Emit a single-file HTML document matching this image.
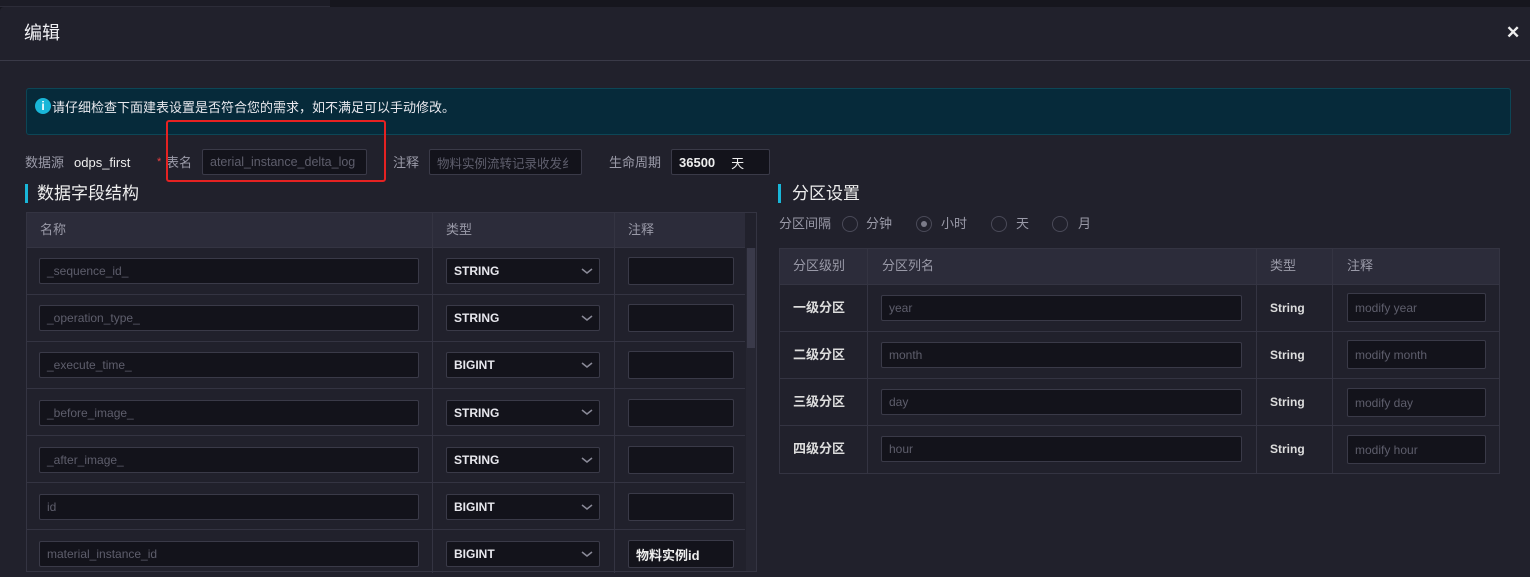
<!DOCTYPE html>
<html><head><meta charset="utf-8"><style>
*{box-sizing:border-box;margin:0;padding:0}
body{width:1530px;height:571px;overflow:hidden;background:#16161e;font-family:"Liberation Sans","Noto Sans CJK SC",sans-serif;position:relative;color:#c8c8d0}
.a{position:absolute}
.modal{left:0;top:7px;width:1530px;height:570px;background:#21212c;border-radius:4px 0 0 0}
.inp{position:absolute;background:#13131b;border:1px solid #3a3a48;border-radius:2px;font-size:12px;color:#5e5e6c;padding-left:7px;display:flex;align-items:center;white-space:nowrap;overflow:hidden}
.sel{color:#e8e8ee;font-weight:bold;font-size:12px}
.t{position:absolute;font-size:13px;white-space:nowrap;line-height:15px}
.hl{position:absolute;height:1px;background:#343442}
.vl{position:absolute;width:1px;background:#343442}
.radio{position:absolute;width:16px;height:16px;border:1px solid #4a4a58;border-radius:50%}
</style></head><body>
<div class="a" style="left:0;top:0;width:330px;height:7px;background:#1c1c26;border-bottom:1px solid #2c2c38"></div>
<div class="a modal"></div>
<div class="t" style="left:24px;top:23px;font-size:18px;line-height:20px;color:#f0f0f4">编辑</div>
<div class="t" style="left:1506px;top:24px;font-size:17px;line-height:18px;font-weight:bold;color:#eee">✕</div>
<div class="hl" style="left:0;top:60px;width:1530px;background:#3a3a48"></div>
<div class="a" style="left:26px;top:88px;width:1485px;height:47px;background:#062a3a;border:1px solid #0c4656;border-radius:3px"></div>
<div class="a" style="left:35px;top:98px;width:16px;height:16px;border-radius:50%;background:#19b6d8;color:#fff;font-size:12px;font-weight:bold;text-align:center;line-height:16px">i</div>
<div class="t" style="left:52px;top:100px;color:#e8e8ee">请仔细检查下面建表设置是否符合您的需求，如不满足可以手动修改。</div>
<div class="t" style="left:25px;top:155px;color:#9a9aa8">数据源</div>
<div class="t" style="left:74px;top:155px;color:#eee">odps_first</div>
<div class="t" style="left:157px;top:155px;color:#e84040;font-size:11px">*</div>
<div class="t" style="left:166px;top:155px;color:#9a9aa8">表名</div>
<div class="inp" style="left:202px;top:149px;width:165px;height:26px;font-size:12.5px">aterial_instance_delta_log</div>
<div class="a" style="left:166px;top:120px;height:62px;border:2px solid #e52222;border-radius:3px;width:220px"></div>
<div class="t" style="left:393px;top:155px;color:#9a9aa8">注释</div>
<div class="inp" style="left:429px;top:149px;width:153px;height:26px;font-size:12.5px">物料实例流转记录收发纟</div>
<div class="t" style="left:609px;top:155px;color:#9a9aa8">生命周期</div>
<div class="inp" style="left:671px;top:149px;width:99px;height:26px;color:#eee;font-weight:bold;font-size:13px">36500 <span style="font-weight:normal;margin-left:16px">天</span></div>
<div class="a" style="left:25px;top:184px;width:3px;height:19px;background:#19b6d8"></div>
<div class="t" style="left:37px;top:184px;font-size:17px;line-height:20px;color:#eee">数据字段结构</div>
<div class="a" style="left:778px;top:184px;width:3px;height:19px;background:#19b6d8"></div>
<div class="t" style="left:792px;top:184px;font-size:17px;line-height:20px;color:#eee">分区设置</div>
<!-- left table -->
<div class="a" style="left:26px;top:212px;width:731px;height:360px;border:1px solid #343442"></div>
<div class="a" style="left:27px;top:213px;width:718px;height:35px;background:#2c2c3a"></div>
<div class="t" style="left:40px;top:222px;color:#9a9aa8">名称</div>
<div class="t" style="left:446px;top:222px;color:#9a9aa8">类型</div>
<div class="t" style="left:628px;top:222px;color:#9a9aa8">注释</div>
<div class="vl" style="left:432px;top:213px;height:360px"></div>
<div class="vl" style="left:614px;top:213px;height:360px"></div>
<div class="a" style="left:746px;top:248px;width:10px;height:323px;background:#262632"></div>
<div class="a" style="left:747px;top:248px;width:8px;height:100px;background:#3a3a4a"></div>
<div class="hl" style="left:27px;top:247px;width:718px"></div>
<div class="hl" style="left:27px;top:294px;width:718px"></div>
<div class="hl" style="left:27px;top:341px;width:718px"></div>
<div class="hl" style="left:27px;top:388px;width:718px"></div>
<div class="hl" style="left:27px;top:435px;width:718px"></div>
<div class="hl" style="left:27px;top:482px;width:718px"></div>
<div class="hl" style="left:27px;top:529px;width:718px"></div>
<div class="inp" style="left:39px;top:258px;width:380px;height:26px">_sequence_id_</div>
<div class="inp sel" style="left:446px;top:258px;width:154px;height:26px">STRING</div>
<div class="inp" style="left:628px;top:257px;width:106px;height:28px"></div>
<div class="inp" style="left:39px;top:305px;width:380px;height:26px">_operation_type_</div>
<div class="inp sel" style="left:446px;top:305px;width:154px;height:26px">STRING</div>
<div class="inp" style="left:628px;top:304px;width:106px;height:28px"></div>
<div class="inp" style="left:39px;top:352px;width:380px;height:26px">_execute_time_</div>
<div class="inp sel" style="left:446px;top:352px;width:154px;height:26px">BIGINT</div>
<div class="inp" style="left:628px;top:351px;width:106px;height:28px"></div>
<div class="inp" style="left:39px;top:400px;width:380px;height:26px">_before_image_</div>
<div class="inp sel" style="left:446px;top:400px;width:154px;height:26px">STRING</div>
<div class="inp" style="left:628px;top:399px;width:106px;height:28px"></div>
<div class="inp" style="left:39px;top:447px;width:380px;height:26px">_after_image_</div>
<div class="inp sel" style="left:446px;top:447px;width:154px;height:26px">STRING</div>
<div class="inp" style="left:628px;top:446px;width:106px;height:28px"></div>
<div class="inp" style="left:39px;top:494px;width:380px;height:26px">id</div>
<div class="inp sel" style="left:446px;top:494px;width:154px;height:26px">BIGINT</div>
<div class="inp" style="left:628px;top:493px;width:106px;height:28px"></div>
<div class="inp" style="left:39px;top:541px;width:380px;height:26px">material_instance_id</div>
<div class="inp sel" style="left:446px;top:541px;width:154px;height:26px">BIGINT</div>
<div class="inp" style="left:628px;top:540px;width:106px;height:28px;color:#eee;font-weight:bold;font-size:13px">物料实例id</div>
<svg class="a" style="left:580px;top:260px" width="14" height="300" viewBox="0 0 14 300" fill="none" stroke="#8a8a98" stroke-width="1.5">
<path d="M2 9l5 4 5-4"/><path d="M2 56l5 4 5-4"/><path d="M2 103l5 4 5-4"/><path d="M2 150l5 4 5-4"/><path d="M2 198l5 4 5-4"/><path d="M2 245l5 4 5-4"/><path d="M2 292l5 4 5-4"/></svg>
<!-- radios -->
<div class="t" style="left:779px;top:216px;color:#9a9aa8">分区间隔</div>
<div class="radio" style="left:842px;top:216px"></div><div class="t" style="left:866px;top:216px;color:#9a9aa8">分钟</div>
<div class="radio" style="left:916px;top:216px"></div><div class="a" style="left:921px;top:221px;width:6px;height:6px;border-radius:50%;background:#7a7a88"></div><div class="t" style="left:941px;top:216px;color:#9a9aa8">小时</div>
<div class="radio" style="left:991px;top:216px"></div><div class="t" style="left:1016px;top:216px;color:#9a9aa8">天</div>
<div class="radio" style="left:1052px;top:216px"></div><div class="t" style="left:1078px;top:216px;color:#9a9aa8">月</div>
<!-- right table -->
<div class="a" style="left:779px;top:248px;width:721px;height:226px;border:1px solid #343442"></div>
<div class="a" style="left:780px;top:249px;width:719px;height:35px;background:#2c2c3a"></div>
<div class="vl" style="left:867px;top:249px;height:225px"></div>
<div class="vl" style="left:1256px;top:249px;height:225px"></div>
<div class="vl" style="left:1332px;top:249px;height:225px"></div>
<div class="hl" style="left:780px;top:284px;width:719px"></div>
<div class="hl" style="left:780px;top:331px;width:719px"></div>
<div class="hl" style="left:780px;top:378px;width:719px"></div>
<div class="hl" style="left:780px;top:425px;width:719px"></div>
<div class="t" style="left:793px;top:258px;color:#9a9aa8">分区级别</div>
<div class="t" style="left:882px;top:258px;color:#9a9aa8">分区列名</div>
<div class="t" style="left:1270px;top:258px;color:#9a9aa8">类型</div>
<div class="t" style="left:1347px;top:258px;color:#9a9aa8">注释</div>
<div class="t" style="left:793px;top:300px;color:#ddd;font-weight:bold">一级分区</div>
<div class="inp" style="left:881px;top:295px;width:361px;height:26px">year</div>
<div class="t" style="left:1270px;top:301px;color:#ddd;font-weight:bold;font-size:12px">String</div>
<div class="inp" style="left:1347px;top:293px;width:139px;height:29px">modify year</div>
<div class="t" style="left:793px;top:347px;color:#ddd;font-weight:bold">二级分区</div>
<div class="inp" style="left:881px;top:342px;width:361px;height:26px">month</div>
<div class="t" style="left:1270px;top:348px;color:#ddd;font-weight:bold;font-size:12px">String</div>
<div class="inp" style="left:1347px;top:340px;width:139px;height:29px">modify month</div>
<div class="t" style="left:793px;top:394px;color:#ddd;font-weight:bold">三级分区</div>
<div class="inp" style="left:881px;top:389px;width:361px;height:26px">day</div>
<div class="t" style="left:1270px;top:395px;color:#ddd;font-weight:bold;font-size:12px">String</div>
<div class="inp" style="left:1347px;top:388px;width:139px;height:29px">modify day</div>
<div class="t" style="left:793px;top:441px;color:#ddd;font-weight:bold">四级分区</div>
<div class="inp" style="left:881px;top:436px;width:361px;height:26px">hour</div>
<div class="t" style="left:1270px;top:442px;color:#ddd;font-weight:bold;font-size:12px">String</div>
<div class="inp" style="left:1347px;top:435px;width:139px;height:29px">modify hour</div>
</body></html>
